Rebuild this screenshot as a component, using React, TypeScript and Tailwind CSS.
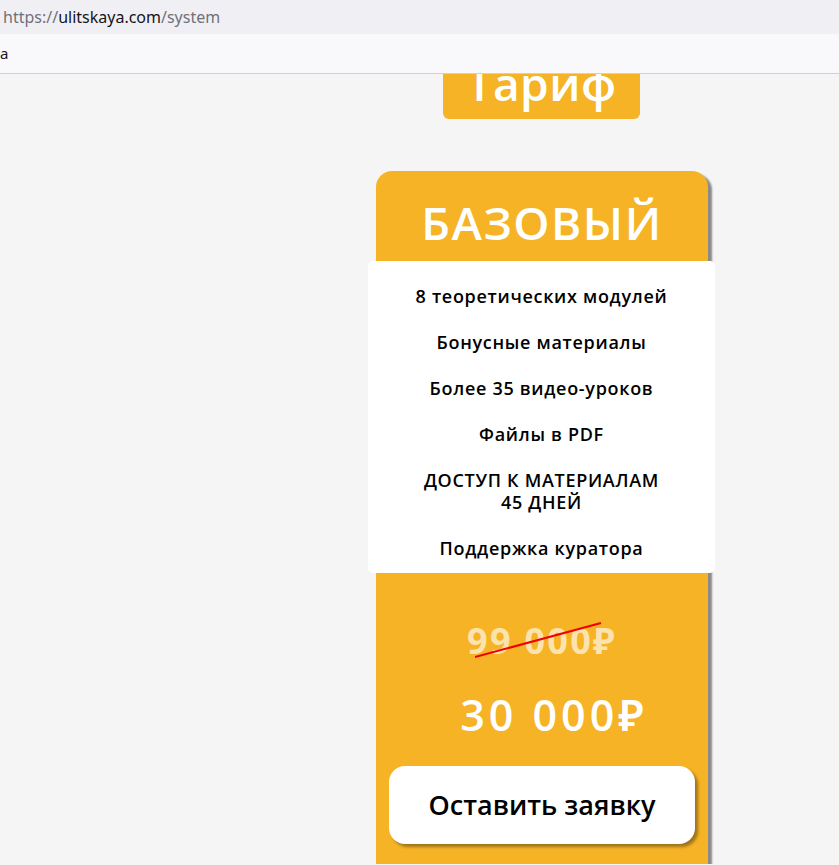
const FEATURES: string[][] = [
  ["8 теоретических модулей"],
  ["Бонусные материалы"],
  ["Более 35 видео-уроков"],
  ["Файлы в PDF"],
  ["ДОСТУП К МАТЕРИАЛАМ", "45 ДНЕЙ"],
  ["Поддержка куратора"],
];

const font = { fontFamily: '"Open Sans", "Noto Sans", sans-serif' };

export default function App() {
  return (
    <div className="h-[865px] w-[839px] overflow-hidden bg-[#f5f5f5]" style={font}>
      {/* browser chrome */}
      <div className="flex h-[34px] items-center bg-[#f0f0f4] pl-[3px] text-[16px] text-[#70707a]" style={{ fontFamily: '"Noto Sans", sans-serif' }}>
        https://<span className="text-[#15141a]">ulitskaya.com</span>/system
      </div>
      <div className="flex h-[40px] items-center border-b border-[#cfcfd8] bg-[#f9f9fb] text-[15px] text-[#15141a]" style={{ fontFamily: '"Noto Sans", sans-serif' }}>
        a
      </div>

      {/* page */}
      <div className="h-[790px] overflow-hidden">
        <div className="ml-[443px] mt-[-22px] flex h-[67px] w-[197px] items-end justify-center rounded-b-[6px] bg-[#f5b325] pb-[13px] text-[46px] font-semibold leading-none tracking-[0.5px] text-white">
          Тариф
        </div>

        <div className="ml-[376px] mt-[52px] w-[332px] rounded-t-[16px] bg-[#f5b325] pb-[40px] shadow-[4px_3px_2px_#8a8a8a]">
          <div className="pb-[16px] pt-[28px] text-center text-[46px] font-semibold leading-none tracking-[1.5px] text-white">
            БАЗОВЫЙ
          </div>

          <div className="mx-[-8px] mr-[-7px] flex flex-col items-center gap-[24px] rounded-[5px] bg-white pb-[14px] pt-[24px] text-center text-[18px] font-semibold leading-[22px] tracking-[0.7px] text-black">
            {FEATURES.map((lines) => (
              <div key={lines[0]}>
                {lines.map((l) => (
                  <div key={l}>{l}</div>
                ))}
              </div>
            ))}
          </div>

          <div className="relative mx-auto mt-[50px] w-fit text-[36px] font-bold leading-none tracking-[2.3px] text-[#fbe3ae]">
            99 000₽
            <svg className="absolute left-[8px] top-[-3px]" width="130" height="40" viewBox="0 0 130 40">
              <line x1="0" y1="37" x2="126" y2="3" stroke="#f20000" strokeWidth="2" />
            </svg>
          </div>

          <div className="mt-[34px] pl-[24px] text-center text-[43px] font-semibold leading-none tracking-[4px] text-white">
            30 000₽
          </div>

          <div className="mx-[13px] mt-[30px] flex h-[78px] items-center justify-center rounded-[16px] bg-white text-[27px] font-semibold text-black shadow-[3px_3px_3px_rgba(0,0,0,0.35)]">
            Оставить заявку
          </div>
        </div>
      </div>
    </div>
  );
}
